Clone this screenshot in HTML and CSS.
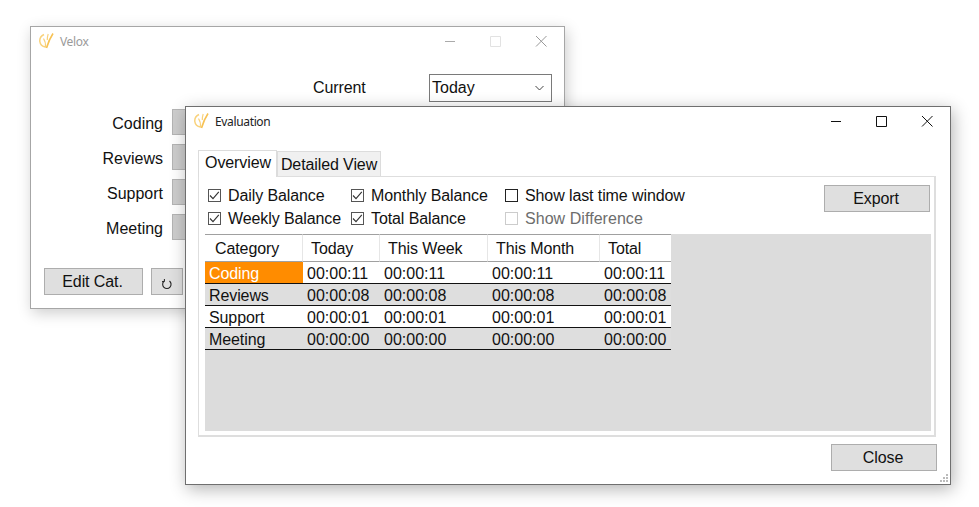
FILE: index.html
```html
<!DOCTYPE html>
<html lang="en">
<head>
<meta charset="utf-8">
<title>Velox</title>
<link rel="stylesheet" href="styles.css">
</head>
<body>
<svg width="0" height="0" class="defs">
  <symbol id="logo" viewBox="0 0 16 16">
    <path d="M5 1.500C2 3 .5 5.500 .8 8.500c.4 3 2.700 5 5.700 5.500" fill="none" stroke="#f9d27c" stroke-width="1.500"/>
    <path d="M6.500 14.500C6.800 11 6.200 8 4.500 5.500" fill="none" stroke="#f9d27c" stroke-width="1.200"/>
    <path d="M7.500 15C9 10 11 5 14 .5" fill="none" stroke="#f7c254" stroke-width="1.600"/>
    <path d="M8.300 7C8.200 4.500 8.500 3 9.200 1" fill="none" stroke="#f9d27c" stroke-width="1.200"/>
  </symbol>
  <symbol id="check" viewBox="0 0 11 11">
    <path d="M1 5.500 4 8.700 9.800 1.800" fill="none" stroke="#333" stroke-width="1.100"/>
  </symbol>
</svg>

<main class="desktop">
  <section class="window velox">
    <header class="titlebar">
      <svg class="logo"><use href="#logo"/></svg>
      <span class="title">Velox</span>
      <div class="controls">
        <svg class="ctl" viewBox="0 0 46 30"><path d="M19 14.500h10" stroke="#aaa" fill="none"/></svg>
        <svg class="ctl" viewBox="0 0 46 30"><path d="M18.500 9.500h10v10h-10z" stroke="#e2e2e2" fill="none"/></svg>
        <svg class="ctl" viewBox="0 0 46 30"><path d="M18 9l10.500 10.500M28.500 9 18 19.500" stroke="#999" fill="none"/></svg>
      </div>
    </header>
    <div class="current-row">
      <span class="label">Current</span>
      <div class="combo"><span>Today</span>
        <svg class="chev" viewBox="0 0 9 6"><path d="M.5 1 4.500 5 8.500 1" fill="none" stroke="#444"/></svg>
      </div>
    </div>
    <div class="cat-list">
      <div class="cat-row"><span class="label">Coding</span><div class="cat-btn"></div></div>
      <div class="cat-row"><span class="label">Reviews</span><div class="cat-btn"></div></div>
      <div class="cat-row"><span class="label">Support</span><div class="cat-btn"></div></div>
      <div class="cat-row"><span class="label">Meeting</span><div class="cat-btn"></div></div>
    </div>
    <div class="velox-actions">
      <button class="btn edit">Edit Cat.</button>
      <button class="btn refresh"><svg viewBox="0 0 12 12" class="refresh-icon"><path d="M3 3.200A4.200 4.200 0 1 0 8.500 3" fill="none" stroke="#222" stroke-width="1.100"/><path d="M3.400 1v2.600H1" fill="none" stroke="#222" stroke-width="1"/></svg></button>
    </div>
  </section>

  <section class="window evaluation">
    <header class="titlebar">
      <svg class="logo"><use href="#logo"/></svg>
      <span class="title dark">Evaluation</span>
      <div class="controls">
        <svg class="ctl" viewBox="0 0 46 30"><path d="M19 14.500h10" stroke="#111" fill="none"/></svg>
        <svg class="ctl" viewBox="0 0 46 30"><path d="M18.500 9.500h10v10h-10z" stroke="#111" fill="none"/></svg>
        <svg class="ctl" viewBox="0 0 46 30"><path d="M18 9l10.500 10.500M28.500 9 18 19.500" stroke="#111" fill="none"/></svg>
      </div>
    </header>
    <div class="tabs">
      <div class="tab active">Overview</div>
      <div class="tab">Detailed View</div>
    </div>
    <div class="panel">
      <div class="options">
        <div class="opt-grid">
          <label class="opt"><span class="box"><svg><use href="#check"/></svg></span>Daily Balance</label>
          <label class="opt"><span class="box"><svg><use href="#check"/></svg></span>Monthly Balance</label>
          <label class="opt"><span class="box plain"></span>Show last time window</label>
          <label class="opt"><span class="box"><svg><use href="#check"/></svg></span>Weekly Balance</label>
          <label class="opt"><span class="box"><svg><use href="#check"/></svg></span>Total Balance</label>
          <label class="opt disabled"><span class="box off"></span>Show Difference</label>
        </div>
        <button class="btn export">Export</button>
      </div>
      <div class="grid-area">
        <table class="data">
          <colgroup><col class="c1"><col class="c2"><col class="c3"><col class="c4"><col class="c5"></colgroup>
          <thead><tr><th>Category</th><th>Today</th><th>This Week</th><th>This Month</th><th>Total</th></tr></thead>
          <tbody>
            <tr><td class="selected">Coding</td><td>00:00:11</td><td>00:00:11</td><td>00:00:11</td><td>00:00:11</td></tr>
            <tr class="alt"><td>Reviews</td><td>00:00:08</td><td>00:00:08</td><td>00:00:08</td><td>00:00:08</td></tr>
            <tr><td>Support</td><td>00:00:01</td><td>00:00:01</td><td>00:00:01</td><td>00:00:01</td></tr>
            <tr class="alt"><td>Meeting</td><td>00:00:00</td><td>00:00:00</td><td>00:00:00</td><td>00:00:00</td></tr>
          </tbody>
        </table>
      </div>
    </div>
    <footer class="footer">
      <button class="btn close">Close</button>
      <svg class="grip" viewBox="0 0 10 10"><path d="M7 1h2v2H7zM4 4h2v2H4zM7 4h2v2H7zM1 7h2v2H1zM4 7h2v2H4zM7 7h2v2H7z" fill="#bbb"/></svg>
    </footer>
  </section>
</main>
</body>
</html>
```

FILE: styles.css
```css
* { box-sizing: border-box; }
html, body { margin: 0; padding: 0; background: #fff; }
body {
  width: 979px;
  height: 507px;
  overflow: hidden;
  font-family: "Liberation Sans", Arial, sans-serif;
  font-size: 16px;
  letter-spacing: -.1px;
  color: #111;
}
.defs { position: absolute; }
.desktop { position: relative; width: 979px; height: 507px; }

.window {
  position: absolute;
  background: #fff;
  display: flex;
  flex-direction: column;
}
.velox {
  left: 30px; top: 26px; width: 535px; height: 283px;
  border: 1px solid #a6a6a6;
  box-shadow: 2px 4px 14px rgba(0,0,0,.2);
}
.evaluation {
  left: 185px; top: 106px; width: 766px; height: 379px;
  border: 1px solid #6f6f6f;
  box-shadow: 2px 4px 16px rgba(0,0,0,.3);
}

.titlebar { display: flex; align-items: center; height: 30px; flex: none; }
.logo { width: 16px; height: 16px; margin-left: 8px; margin-top: -2px; flex: none; }
.title { margin-left: 5px; margin-top: -1px; font: 12px "Noto Sans", sans-serif; letter-spacing: -.35px; color: #9a9a9a; }
.title.dark { color: #222; }
.controls { margin-left: auto; display: flex; }
.ctl { width: 46px; height: 30px; display: block; }

.current-row { display: flex; align-items: center; height: 28px; margin-top: 17px; padding-left: 282px; }
.current-row .label { width: 116px; }
.combo {
  width: 123px; height: 28px;
  border: 1px solid #7a7a7a;
  display: flex; align-items: center; justify-content: space-between;
  padding: 0 7px 0 2px;
  letter-spacing: 0;
  background: #fff;
}
.chev { width: 9px; height: 6px; }

.cat-list { display: flex; flex-direction: column; gap: 9px; margin-top: 7px; }
.cat-row { display: flex; align-items: center; height: 26px; }
.cat-row .label { width: 132px; text-align: right; padding-top: 4px; letter-spacing: 0; }
.cat-btn { width: 40px; height: 26px; margin-left: 9px; background: #cdcdcd; border: 1px solid #b4b4b4; }

.velox-actions { display: flex; gap: 8px; padding-left: 13px; margin-top: 28px; }

.btn {
  font: inherit;
  letter-spacing: inherit;
  color: #111;
  background: #dfdfdf;
  border: 1px solid #adadad;
  padding: 0 2px 0 0;
  height: 27px;
}
.edit { width: 99px; }
.refresh { width: 32px; display: flex; align-items: center; justify-content: center; padding: 5px 0 0; }
.refresh-icon { width: 12px; height: 12px; }

.tabs { display: flex; align-items: flex-end; height: 27px; margin: 12px 0 0 12px; flex: none; }
.tab {
  height: 25px;
  width: 104px;
  background: #f0f0f0;
  border: 1px solid #dcdcdc; border-bottom: 0;
  display: flex; align-items: center; justify-content: center;
  padding-top: 1px;
  white-space: nowrap;
}
.tab.active {
  width: 79px; height: 27px;
  background: #fff;
  padding: 0 0 2px 1px;
  position: relative; top: 1px;
  z-index: 1;
}

.panel {
  margin: 0 14px 0 12px;
  height: 261px;
  border: 2px solid #dedede;
  border-width: 1px 2px 2px 1px;
  padding: 7px 3px 4px 6px;
  display: flex; flex-direction: column;
}
.options { display: flex; justify-content: space-between; height: 50px; }
.opt-grid {
  display: grid;
  grid-template-columns: 143px 154px auto;
  grid-auto-rows: 23px;
  padding-left: 3px;
}
.opt { display: flex; align-items: center; gap: 7px; white-space: nowrap; }
.opt.disabled { color: #6d6d6d; letter-spacing: .05px; }
.box { width: 13px; height: 13px; border: 1px solid #555; flex: none; display: block; }
.box svg { width: 11px; height: 11px; display: block; }
.box.plain { border-color: #222; }
.box.off { border-color: #ccc; }
.export { width: 106px; margin: 1px 1px 0 0; }

.grid-area { background: #dcdcdc; height: 197px; flex: none; }
.data {
  border-collapse: separate; border-spacing: 0;
  table-layout: fixed; width: 466px;
}
.c1 { width: 98px; } .c2 { width: 77px; } .c3 { width: 108px; } .c4 { width: 112px; } .c5 { width: 71px; }
.data th {
  background: #fff; font-weight: 400; text-align: left;
  height: 28px; padding: 2px 0 0 8px;
  border-top: 1px solid #a0a0a0;
  border-bottom: 1px solid #a0a0a0;
  border-right: 1px solid #e6e6e6;
}
.data th:first-child { padding-left: 10px; }
.data th:last-child { border-right: 0; }
.data td {
  background: #fff; height: 22px; padding: 3px 0 0 4px;
  border-bottom: 1px solid #111;
  line-height: 18px;
  letter-spacing: 0;
}
.data td:first-child { letter-spacing: -.1px; }
.data .alt td { background: #dedede; }
.data td.selected { background: #ff8c00; color: #fff; }

.footer { position: relative; display: flex; justify-content: flex-end; padding: 7px 13px 0 0; }
.close { width: 106px; }
.grip { position: absolute; right: 1px; bottom: -12px; width: 10px; height: 10px; }
```
